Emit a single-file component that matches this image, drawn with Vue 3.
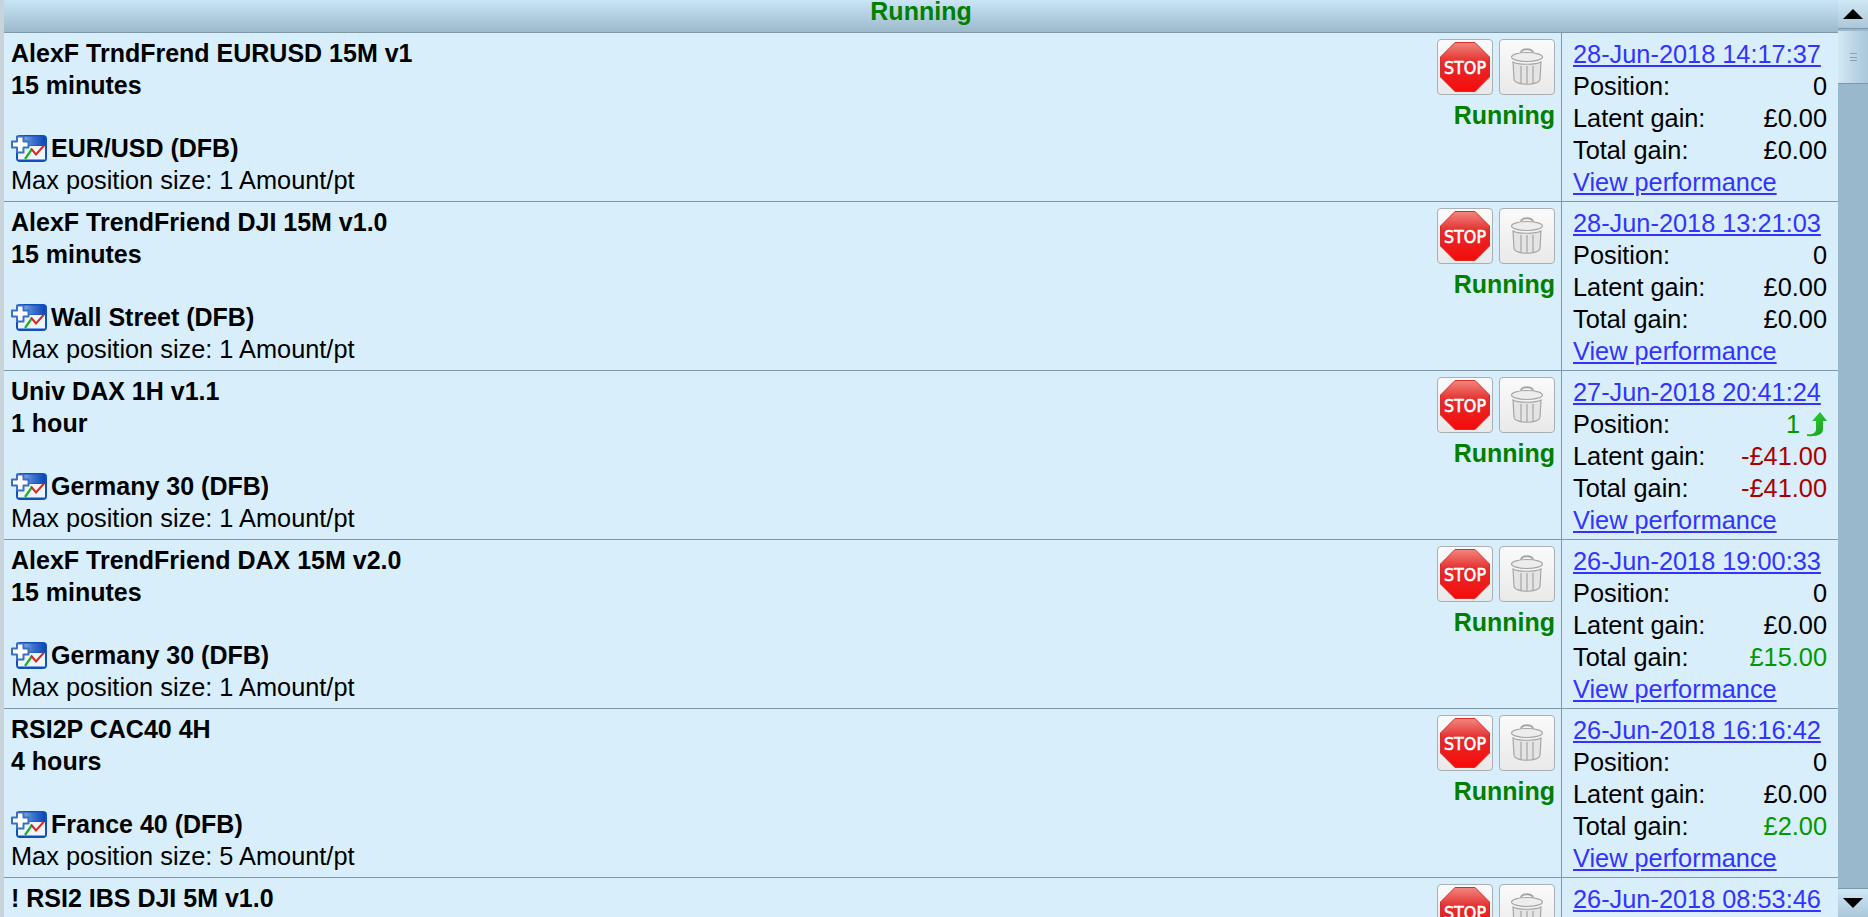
<template>
  <div class="page">
    <div class="gutter"></div>
    <div class="list">
      <div class="list-header">Running</div>
      <div v-for="row in rows" :key="row.opened" class="row">
        <div class="info">
          <div class="name">{{ row.name }}</div>
          <div class="name">{{ row.period }}</div>
          <div class="market">
            <svg class="chart-icon" width="36" height="27" viewBox="0 0 36 27">
              <defs>
                <linearGradient id="chartSky" x1="0" y1="0" x2="1" y2="0">
                  <stop offset="0" stop-color="#a9c8ec" />
                  <stop offset="0.55" stop-color="#3f74cc" />
                  <stop offset="1" stop-color="#0b46b8" />
                </linearGradient>
              </defs>
              <rect x="5" y="0" width="31" height="27" rx="4" fill="#0f4fc0" />
              <rect x="7" y="1.500" width="27" height="9" fill="url(#chartSky)" />
              <rect x="7" y="11" width="27" height="13.500" fill="#eef6fd" />
              <path d="M1 6.500h5v-5h6.500v5h5v6h-5v5h-6.500v-5h-5z" fill="#fff" stroke="#3a6fc8" stroke-width="2" stroke-linejoin="round" />
              <path d="M14 24l7-10" fill="none" stroke="#1cae2c" stroke-width="2.200" />
              <path d="M20 13.500l5 6 8-9" fill="none" stroke="#d92a20" stroke-width="2" />
            </svg>
            <span class="name">{{ row.market }}</span>
          </div>
          <div class="plain">Max position size: {{ row.size }} Amount/pt</div>
        </div>
        <div class="actions">
          <div class="buttons">
            <button class="icon-btn" type="button">
              <svg width="52" height="52" viewBox="0 0 52 52">
                <defs>
                  <linearGradient id="stopFill" x1="0" y1="0" x2="0" y2="1">
                    <stop offset="0" stop-color="#f2877e" />
                    <stop offset="0.4" stop-color="#e42c2c" />
                    <stop offset="1" stop-color="#f80a0a" />
                  </linearGradient>
                </defs>
                <path d="M16 1.500h20l14.500 14.500v20l-14.500 14.500h-20l-14.500-14.500v-20z" fill="url(#stopFill)" stroke="#cf3028" stroke-width="1" />
                <text x="26" y="32.500" textLength="42" lengthAdjust="spacingAndGlyphs" class="stop-text">STOP</text>
              </svg>
            </button>
            <button class="icon-btn" type="button">
              <svg width="34" height="38" viewBox="0 0 34 38" fill="none" stroke="#a6a6a6" stroke-width="1.200">
                <path d="M11 5c0-5 12-5 12 0" stroke-width="2" />
                <ellipse cx="17" cy="9" rx="15.500" ry="4.500" fill="#ededed" />
                <path d="M3 14l1 17c0 7 26 7 26 0l1-17c-5 3-23 3-28 0z" fill="#e4e4e4" />
                <path d="M11 18v17M17 18v18M23 18v17" />
              </svg>
            </button>
          </div>
          <div class="status">Running</div>
        </div>
        <div class="stats">
          <a class="link" href="#">{{ row.opened }}</a>
          <div class="stat">
            <span>Position:</span>
            <span :class="row.position > 0 ? 'gain' : ''" class="position">
              {{ row.position }}
              <svg v-if="row.position > 0" width="20" height="25" viewBox="0 0 20 25">
                <defs>
                  <linearGradient id="upFill" x1="0" y1="0" x2="1" y2="1">
                    <stop offset="0" stop-color="#38d63a" />
                    <stop offset="1" stop-color="#119a1c" />
                  </linearGradient>
                </defs>
                <path d="M0 22c4 1 8 0 9-4V9H5l8-9 7 9h-4v8c0 5-5 8-16 7z" fill="url(#upFill)" />
              </svg>
            </span>
          </div>
          <div class="stat"><span>Latent gain:</span><span :class="tone(row.latent)">{{ row.latent }}</span></div>
          <div class="stat"><span>Total gain:</span><span :class="tone(row.total)">{{ row.total }}</span></div>
          <a class="link" href="#">View performance</a>
        </div>
      </div>
    </div>
    <div class="scrollbar">
      <div class="arrow-btn"><span class="arrow-up"></span></div>
      <div class="thumb"><span class="grip"></span></div>
      <div class="track"></div>
      <div class="arrow-btn down"><span class="arrow-down"></span></div>
    </div>
  </div>
</template>

<script setup>
const rows = [
  { name: 'AlexF TrndFrend EURUSD 15M v1', period: '15 minutes', market: 'EUR/USD (DFB)', size: 1, opened: '28-Jun-2018 14:17:37', position: 0, latent: '£0.00', total: '£0.00' },
  { name: 'AlexF TrendFriend DJI 15M v1.0', period: '15 minutes', market: 'Wall Street (DFB)', size: 1, opened: '28-Jun-2018 13:21:03', position: 0, latent: '£0.00', total: '£0.00' },
  { name: 'Univ DAX 1H v1.1', period: '1 hour', market: 'Germany 30 (DFB)', size: 1, opened: '27-Jun-2018 20:41:24', position: 1, latent: '-£41.00', total: '-£41.00' },
  { name: 'AlexF TrendFriend DAX 15M v2.0', period: '15 minutes', market: 'Germany 30 (DFB)', size: 1, opened: '26-Jun-2018 19:00:33', position: 0, latent: '£0.00', total: '£15.00' },
  { name: 'RSI2P CAC40 4H', period: '4 hours', market: 'France 40 (DFB)', size: 5, opened: '26-Jun-2018 16:16:42', position: 0, latent: '£0.00', total: '£2.00' },
  { name: '! RSI2 IBS DJI 5M v1.0', period: '5 minutes', market: 'Wall Street (DFB)', size: 1, opened: '26-Jun-2018 08:53:46', position: 0, latent: '£0.00', total: '£0.00' }
]

const tone = (value) => {
  if (value.startsWith('-')) return 'loss'
  return value === '£0.00' ? '' : 'gain'
}
</script>

<style>
html, body {
  margin: 0;
  overflow: hidden;
}
</style>

<style scoped>
.page {
  display: flex;
  height: 917px;
  overflow: hidden;
  background: #9ab8cb;
  font-family: "Liberation Sans", Arial, sans-serif;
  font-size: 25.33px;
  line-height: 32px;
  color: #000;
}

.gutter {
  width: 4px;
  flex-shrink: 0;
  background: #c9d4da;
}

.list {
  flex: 1;
  min-width: 0;
  background: #d8eefa;
}

.list-header {
  height: 32px;
  border-bottom: 1px solid #7d98a9;
  background: linear-gradient(#c9e5f6, #9cb9cc);
  color: #008000;
  font-size: 25px;
  font-weight: bold;
  text-align: center;
  line-height: 23px;
}

.row {
  display: flex;
  height: 168px;
  border-bottom: 1px solid #7d98a9;
}

.info {
  flex: 1;
  min-width: 0;
  padding: 4px 0 0 7px;
}

.name {
  font-size: 25px;
  font-weight: bold;
}

.market {
  display: flex;
  align-items: center;
  gap: 4px;
  margin-top: 31px;
}

.actions {
  width: 120px;
  padding: 6px 6px 0 0;
}

.buttons {
  display: flex;
  justify-content: flex-end;
  gap: 6px;
}

.icon-btn {
  display: flex;
  align-items: center;
  justify-content: center;
  width: 56px;
  height: 56px;
  padding: 0;
  border: 1px solid #a9b0b5;
  border-radius: 4px;
  background: linear-gradient(#fafafa, #e9e9e9);
}

.stop-text {
  font-family: "DejaVu Sans", sans-serif;
  font-size: 18px;
  text-anchor: middle;
  fill: #fff;
  stroke: #fff;
  stroke-width: 0.6;
}

.status {
  margin-top: 4px;
  color: #008000;
  font-size: 25px;
  font-weight: bold;
  text-align: right;
}

.stats {
  width: 277px;
  flex-shrink: 0;
  box-sizing: border-box;
  padding: 5px 11px 0 11px;
  border-left: 1px solid #7d98a9;
}

.link {
  display: block;
  width: fit-content;
  color: #3333ff;
}

.stat {
  display: flex;
  justify-content: space-between;
}

.position {
  display: flex;
  align-items: center;
  gap: 7px;
}

.gain {
  color: #009900;
}

.loss {
  color: #aa0000;
}

.scrollbar {
  width: 30px;
  flex-shrink: 0;
  display: flex;
  flex-direction: column;
}

.arrow-btn {
  display: flex;
  align-items: center;
  justify-content: center;
  height: 28px;
  border-bottom: 1px solid #7d98a9;
  background: linear-gradient(#d0e8f6, #aac7d9);
}

.arrow-btn.down {
  border-bottom: 0;
  border-top: 1px solid #7d98a9;
}

.arrow-up {
  border-left: 10px solid transparent;
  border-right: 10px solid transparent;
  border-bottom: 10px solid #000;
}

.arrow-down {
  border-left: 10px solid transparent;
  border-right: 10px solid transparent;
  border-top: 10px solid #000;
}

.thumb {
  display: flex;
  align-items: center;
  justify-content: center;
  height: 52px;
  margin-top: 2px;
  border-bottom: 1px solid #7d98a9;
  background: linear-gradient(90deg, #d2e8f5, #a9c6d8);
}

.grip {
  width: 7px;
  height: 6px;
  border-top: 1px solid #8aa2b0;
  border-bottom: 1px solid #8aa2b0;
  background: linear-gradient(transparent 45%, #8aa2b0 45%, #8aa2b0 60%, transparent 60%);
}

.track {
  flex: 1;
}
</style>
